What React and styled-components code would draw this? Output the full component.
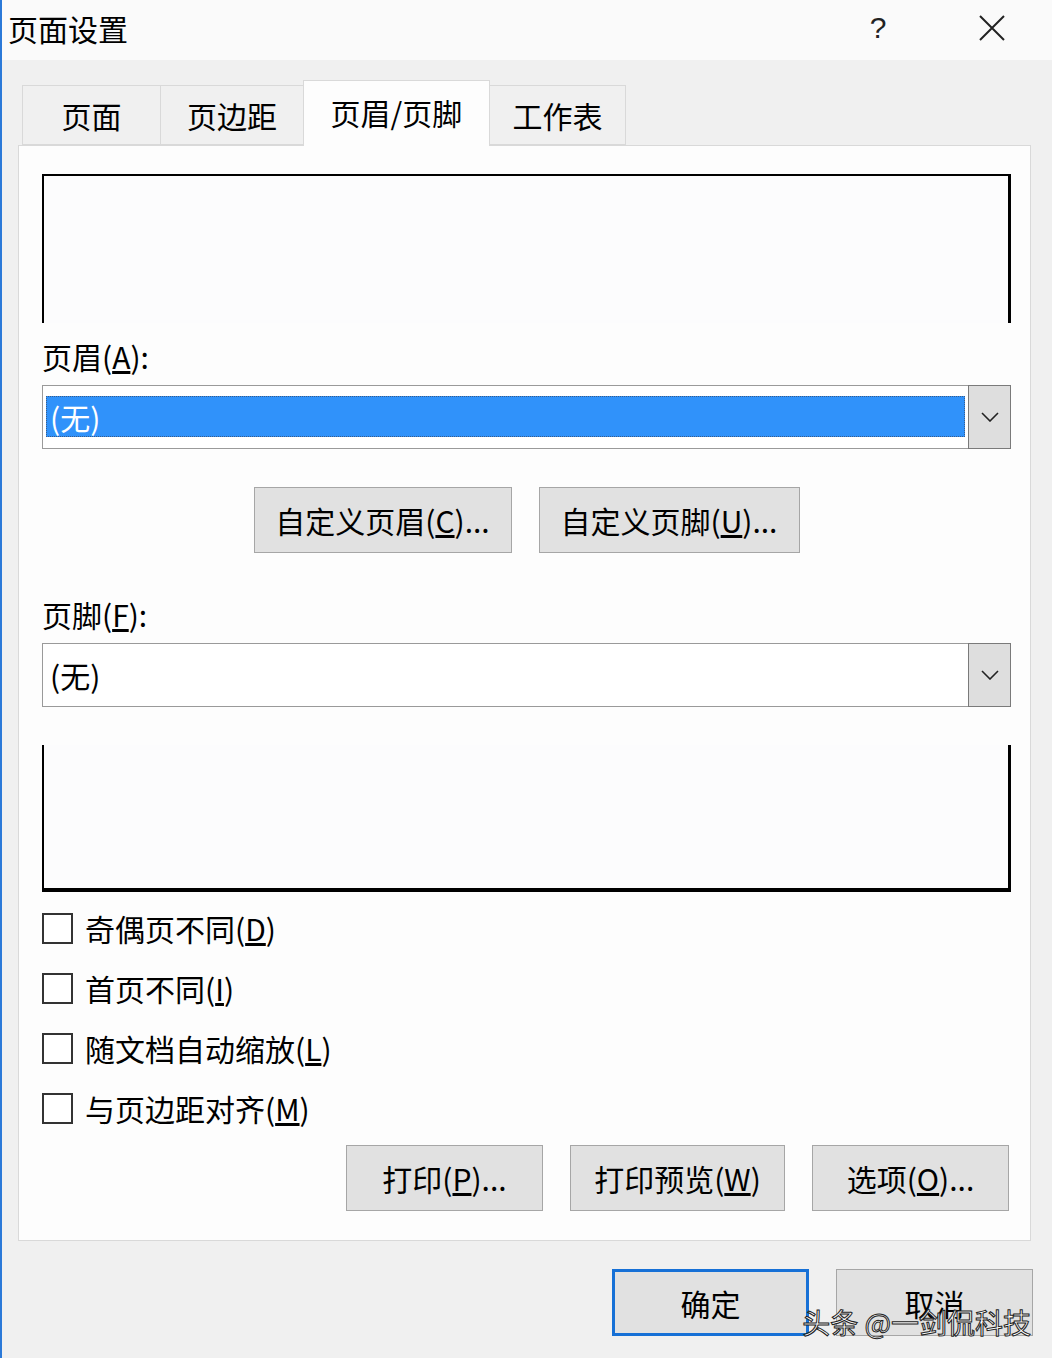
import React from "react";
import styled, { createGlobalStyle } from "styled-components";

const Global = createGlobalStyle`
  html, body { margin: 0; padding: 0; background: #f0f0f0; }
  body { font-family: "Noto Sans CJK SC", "Noto Sans", sans-serif; color: #000; }
  * { box-sizing: border-box; }
`;

const Window = styled.div`
  width: 1052px;
  height: 1358px;
  border-left: 2px solid #2b79d8;
  background: #f0f0f0;
  display: flex;
  flex-direction: column;
  position: relative;
  overflow: hidden;
`;

const TitleBar = styled.div`
  height: 60px;
  flex: none;
  background: #fafafa;
  display: flex;
  align-items: center;
  padding-left: 6px;
`;

const Title = styled.div`
  font-size: 30px;
  line-height: 40px;
  margin-top: -4px;
  flex: 1;
`;

const TitleBtn = styled.div`
  width: ${(p) => p.$w}px;
  height: 60px;
  display: flex;
  align-items: center;
  justify-content: center;
  font-family: "Liberation Sans", sans-serif;
  font-size: 30px;
  font-weight: 300;
  color: #222;
  margin-top: -4px;
`;

const Body = styled.div`
  flex: 1;
  display: flex;
  flex-direction: column;
  padding: 20px 21px 0 16px;
`;

const TabRow = styled.div`
  display: flex;
  align-items: flex-end;
  height: 65px;
  padding-left: 4px;
  position: relative;
  z-index: 1;
`;

const Tab = styled.div`
  width: ${(p) => p.$w}px;
  height: ${(p) => (p.$active ? 66 : 60)}px;
  margin-bottom: ${(p) => (p.$active ? -1 : 0)}px;
  margin-left: -1px;
  border: 1px solid #d9d9d9;
  border-bottom: ${(p) => (p.$active ? "none" : "1px solid #d9d9d9")};
  background: ${(p) => (p.$active ? "#fdfdfd" : "#f0f0f0")};
  display: flex;
  align-items: center;
  justify-content: center;
  padding-bottom: ${(p) => (p.$active ? 4 : 0)}px;
  font-size: 30px;
  line-height: 40px;
  &:first-child { margin-left: 0; }
`;

const Panel = styled.div`
  border: 1px solid #d9d9d9;
  background: #fdfdfd;
  padding: 28px 19px 29px 23px;
  display: flex;
  flex-direction: column;
`;

const Preview = styled.div`
  height: ${(p) => p.$h}px;
  margin-top: ${(p) => p.$mt || 0}px;
  border-left: 2px solid #000;
  border-right: 3px solid #000;
  border-top: ${(p) => (p.$top ? "2px solid #000" : "none")};
  border-bottom: ${(p) => (p.$bottom ? "4px solid #000" : "none")};
  background: #fcfcfd;
`;

const Label = styled.div`
  font-size: 30px;
  line-height: 40px;
  margin-top: ${(p) => p.$mt}px;
`;

const Select = styled.div`
  margin-top: 9px;
  height: 64px;
  border: 1px solid #9a9a9a;
  background: #fff;
  display: flex;
  align-items: stretch;
`;

const SelectValue = styled.div`
  flex: 1;
  margin: ${(p) => (p.$hl ? "10px 3px 11px 3px" : "0")};
  background: ${(p) => (p.$hl ? "#3092fa" : "transparent")};
  border: ${(p) => (p.$hl ? "1px dotted #3a5c8a" : "none")};
  color: ${(p) => (p.$hl ? "#fff" : "#000")};
  display: flex;
  align-items: center;
  padding-left: ${(p) => (p.$hl ? 3 : 7)}px;
  font-size: 30px;
  line-height: 40px;
`;

const DropBtn = styled.div`
  width: 43px;
  margin: -1px -1px -1px 0;
  background: #dedede;
  border: 1px solid #7a7a7a;
  display: flex;
  align-items: center;
  justify-content: center;
`;

const CenterRow = styled.div`
  display: flex;
  justify-content: center;
  gap: 27px;
  margin-top: 38px;
`;

const RightRow = styled.div`
  display: flex;
  justify-content: flex-end;
  gap: 27px;
  margin-top: ${(p) => p.$mt}px;
  margin-right: ${(p) => p.$mr || 0}px;
`;

const Button = styled.div`
  width: ${(p) => p.$w}px;
  height: ${(p) => p.$h || 66}px;
  background: #e1e1e1;
  border: ${(p) => (p.$default ? "3px solid #1670d6" : "1px solid #a6a6a6")};
  display: flex;
  align-items: center;
  justify-content: center;
  font-size: 30px;
  line-height: 40px;
  white-space: nowrap;
`;

const Checks = styled.div`
  margin-top: 6px;
  display: flex;
  flex-direction: column;
`;

const CheckRow = styled.div`
  height: 60px;
  display: flex;
  align-items: center;
  gap: 12px;
`;

const Box = styled.div`
  width: 31px;
  height: 31px;
  border: 2px solid #333;
  background: #fff;
  flex: none;
`;

const CheckText = styled.span`
  font-size: 30px;
  line-height: 40px;
`;

const Footer = styled.div`
  flex: 1;
  position: relative;
  margin-right: -2px;
`;

const Watermark = styled.div`
  position: absolute;
  right: 2px;
  bottom: 18px;
  font-size: 28px;
  line-height: 36px;
  color: #fff;
  -webkit-text-stroke: 1px #222;
  white-space: nowrap;
`;

const Chevron = () => (
  <svg width="18" height="10" viewBox="0 0 18 10">
    <path d="M1 1 L9 9 L17 1" fill="none" stroke="#222" strokeWidth="1.6" />
  </svg>
);

const CloseIcon = () => (
  <svg width="28" height="28" viewBox="0 0 28 28">
    <path d="M2 2 L26 26 M26 2 L2 26" stroke="#222" strokeWidth="2" />
  </svg>
);

export default function App() {
  return (
    <>
      <Global />
      <Window>
        <TitleBar>
          <Title>页面设置</Title>
          <TitleBtn $w={30}>?</TitleBtn>
          <TitleBtn $w={69} />
          <TitleBtn $w={60}>
            <CloseIcon />
          </TitleBtn>
          <TitleBtn $w={30} />
        </TitleBar>
        <Body>
          <TabRow>
            <Tab $w={139}>页面</Tab>
            <Tab $w={144}>页边距</Tab>
            <Tab $w={187} $active>页眉/页脚</Tab>
            <Tab $w={137}>工作表</Tab>
          </TabRow>
          <Panel>
            <Preview $h={149} $top />
            <Label $mt={13}>
              页眉(<u>A</u>):
            </Label>
            <Select>
              <SelectValue $hl>(无)</SelectValue>
              <DropBtn>
                <Chevron />
              </DropBtn>
            </Select>
            <CenterRow>
              <Button $w={258}>
                自定义页眉(<u>C</u>)...
              </Button>
              <Button $w={261}>
                自定义页脚(<u>U</u>)...
              </Button>
            </CenterRow>
            <Label $mt={41}>
              页脚(<u>F</u>):
            </Label>
            <Select>
              <SelectValue>(无)</SelectValue>
              <DropBtn>
                <Chevron />
              </DropBtn>
            </Select>
            <Preview $h={147} $mt={38} $bottom />
            <Checks>
              <CheckRow>
                <Box />
                <CheckText>
                  奇偶页不同(<u>D</u>)
                </CheckText>
              </CheckRow>
              <CheckRow>
                <Box />
                <CheckText>
                  首页不同(<u>I</u>)
                </CheckText>
              </CheckRow>
              <CheckRow>
                <Box />
                <CheckText>
                  随文档自动缩放(<u>L</u>)
                </CheckText>
              </CheckRow>
              <CheckRow>
                <Box />
                <CheckText>
                  与页边距对齐(<u>M</u>)
                </CheckText>
              </CheckRow>
            </Checks>
            <RightRow $mt={7} $mr={2}>
              <Button $w={197}>
                打印(<u>P</u>)...
              </Button>
              <Button $w={215}>
                打印预览(<u>W</u>)
              </Button>
              <Button $w={197}>
                选项(<u>O</u>)...
              </Button>
            </RightRow>
          </Panel>
          <Footer>
            <RightRow $mt={28}>
              <Button $w={197} $h={67} $default>
                确定
              </Button>
              <Button $w={197} $h={67}>
                取消
              </Button>
            </RightRow>
            <Watermark>头条 @一剑侃科技</Watermark>
          </Footer>
        </Body>
      </Window>
    </>
  );
}
